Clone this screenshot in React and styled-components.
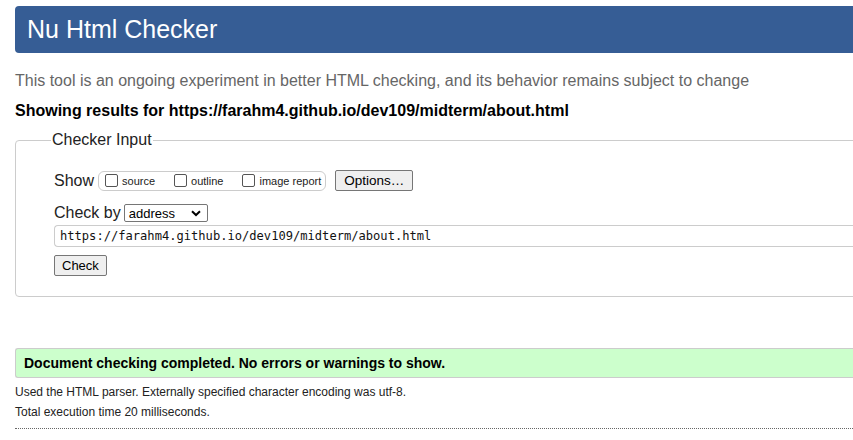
import React from 'react';
import styled, { createGlobalStyle } from 'styled-components';

const Global = createGlobalStyle`
  html, body {
    margin: 0;
    padding: 0;
    background: #fff;
    overflow: hidden;
  }
  body {
    font-family: "Liberation Sans", Arial, sans-serif;
    color: #000;
  }
`;

const Page = styled.div`
  width: 1100px;
  padding: 6px 0 0 15px;
`;

const Header = styled.h1`
  margin: 0;
  height: 47px;
  display: flex;
  align-items: center;
  padding-left: 12px;
  background: #365d95;
  color: #fff;
  font-weight: normal;
  font-size: 25px;
  border-radius: 4px 0 0 4px;
`;

const Intro = styled.p`
  margin: 18px 0 0;
  font-size: 16px;
  line-height: 20px;
  color: #666;
`;

const Results = styled.p`
  margin: 10px 0 0;
  font-size: 16px;
  line-height: 20px;
  font-weight: bold;
`;

const Fieldset = styled.fieldset`
  margin: 9px 0 0;
  padding: 20px 38px 20px;
  border: 1px solid #ccc;
  border-radius: 4px 0 0 4px;
  min-width: 0;
`;

const Legend = styled.legend`
  margin-left: -3px;
  padding: 0 1px;
  font-size: 16px;
  line-height: 20px;
  color: #222;
`;

const Row = styled.div`
  display: flex;
  align-items: center;
  font-size: 16px;
  color: #222;
  margin-top: ${p => p.$top || 0}px;
`;

const Group = styled.div`
  display: flex;
  align-items: center;
  height: 18px;
  margin-left: 4px;
  padding: 0 4px 0 6px;
  border: 1px solid #ccc;
  border-radius: 6px;
  gap: 19px;
`;

const Opt = styled.label`
  display: flex;
  align-items: center;
  font-size: 11px;
  color: #222;
`;

const Box = styled.span`
  display: inline-block;
  width: 11px;
  height: 11px;
  border: 1px solid #555;
  border-radius: 2px;
  margin-right: 4px;
  background: #fff;
`;

const Button = styled.button`
  font-family: "Liberation Sans", Arial, sans-serif;
  font-size: ${p => p.$size || 13}px;
  height: 21px;
  padding: 0 ${p => p.$pad || 7}px;
  margin-left: ${p => p.$left || 0}px;
  background: #efefef;
  border: 1px solid #767676;
  border-radius: 2px;
  color: #000;
`;

const Select = styled.div`
  display: flex;
  align-items: center;
  justify-content: space-between;
  width: 78px;
  height: 16px;
  margin-left: 3px;
  padding: 0 0 0 4px;
  box-sizing: content-box;
  border: 1px solid #767676;
  border-radius: 2px;
  font-size: 13px;
  color: #000;
  svg { margin-right: 6px; }
`;

const UrlInput = styled.div`
  margin-top: 3px;
  height: 20px;
  display: flex;
  align-items: center;
  padding-left: 5px;
  border: 1px solid #ccc;
  border-right: none;
  border-radius: 4px 0 0 4px;
  font-family: "DejaVu Sans Mono", "Liberation Mono", monospace;
  font-size: 12.1px;
  color: #111;
`;

const Success = styled.div`
  margin-top: 51px;
  height: 28px;
  display: flex;
  align-items: center;
  padding-left: 8px;
  background: #ccffcc;
  border: 1px solid #ccc;
  border-right: none;
  border-radius: 3px 0 0 3px;
  font-size: 14px;
  font-weight: bold;
`;

const Note = styled.p`
  margin: ${p => p.$top || 0}px 0 0;
  font-size: 12px;
  line-height: 14px;
  color: #222;
`;

const Rule = styled.hr`
  margin: 9px 0 0;
  border: none;
  border-top: 1px dotted #666;
`;

export default function App() {
  return (
    <>
      <Global />
      <Page>
        <Header>Nu Html Checker</Header>
        <Intro>This tool is an ongoing experiment in better HTML checking, and its behavior remains subject to change</Intro>
        <Results>Showing results for https://farahm4.github.io/dev109/midterm/about.html</Results>
        <Fieldset>
          <Legend>Checker Input</Legend>
          <Row>
            Show
            <Group>
              <Opt><Box />source</Opt>
              <Opt><Box />outline</Opt>
              <Opt><Box />image report</Opt>
            </Group>
            <Button $left={9} $size={13.5} $pad={8}>Options…</Button>
          </Row>
          <Row $top={13}>
            Check by
            <Select>
              address
              <svg width="10" height="7" viewBox="0 0 10 7">
                <path d="M1 1.2 L5 5 L9 1.2" fill="none" stroke="#000" strokeWidth="2" />
              </svg>
            </Select>
          </Row>
          <UrlInput>https://farahm4.github.io/dev109/midterm/about.html</UrlInput>
          <Row $top={8}>
            <Button>Check</Button>
          </Row>
        </Fieldset>
        <Success>Document checking completed. No errors or warnings to show.</Success>
        <Note $top={7}>Used the HTML parser. Externally specified character encoding was utf-8.</Note>
        <Note $top={6}>Total execution time 20 milliseconds.</Note>
        <Rule />
      </Page>
    </>
  );
}
